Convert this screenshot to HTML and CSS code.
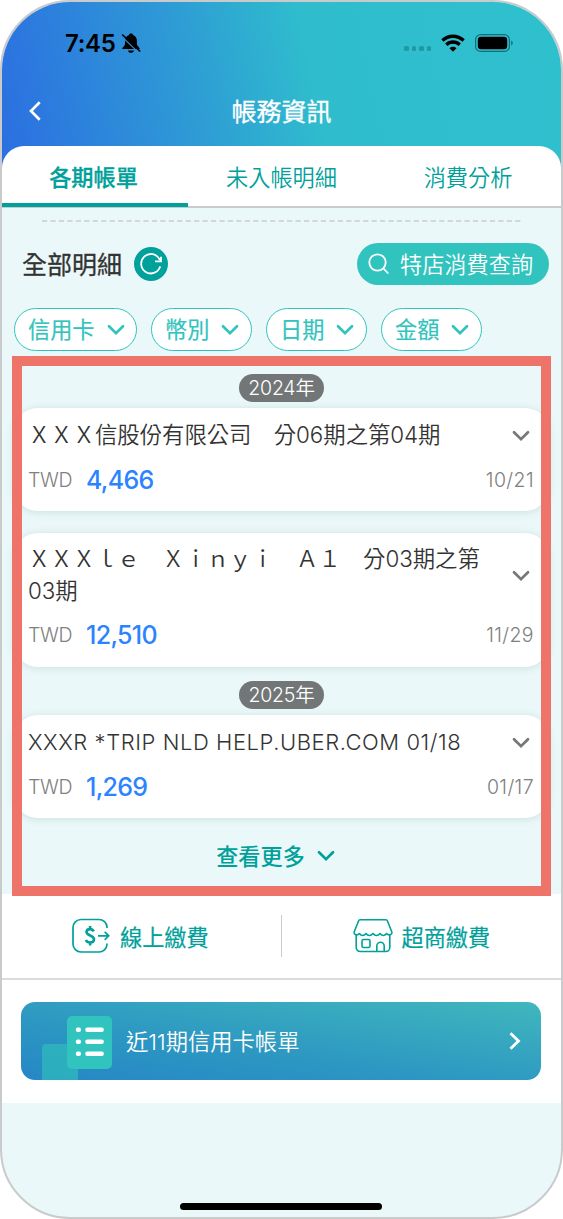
FILE: index.html
```
<!DOCTYPE html>
<html lang="zh-Hant">
<head>
<meta charset="utf-8">
<meta name="viewport" content="width=device-width, initial-scale=1">
<title>帳務資訊</title>
<link rel="stylesheet" href="styles.css">
</head>
<body>
<svg class="defs" aria-hidden="true">
  <symbol id="chevron" viewBox="0 0 18 12"><path d="M2 2.200 9 9.200 16 2.200" fill="none" stroke="currentColor" stroke-width="2.700" stroke-linecap="round"/></symbol>
</svg>
<div class="phone">
  <header class="header">
    <div class="status">
      <span class="clock">7:45</span>
      <svg class="bell" viewBox="0 0 20 20"><path d="M10 .5c1.300 0 2 .7 2.200 1.700 2.600.8 3.700 3 3.700 5.600v3c0 1.500.8 2.300 1.900 3.400.6.6.9 1.100.9 1.900H1.200c0-.8.3-1.300.9-1.900C3.200 13 4 12.300 4 10.800v-3c0-2.600 1.200-4.800 3.800-5.600C8 1.200 8.700.5 10 .5zM7 17.400h6c-.3 1.500-1.400 2.300-3 2.300s-2.700-.8-3-2.300z"/><path class="bell-gap" d="M.1 3 18.200 20.100"/><path class="bell-slash" d="M1.200 1.500 19.200 18.500"/></svg>
      <span class="dots"><i></i><i></i><i></i><i></i></span>
      <svg class="wifi" viewBox="0 0 24 18"><g fill="none" stroke="#000" stroke-width="3.300"><path d="M1.400 6.500a15.300 15.300 0 0 1 21.200 0"/><path d="M5.300 10.700a9.600 9.600 0 0 1 13.400 0"/></g><path d="M12 17.700 8.500 14.200a5 5 0 0 1 7 0z"/></svg>
      <svg class="battery" viewBox="0 0 39 18"><rect x=".6" y=".6" width="33.800" height="16.800" rx="5" fill="none" stroke="#156d78" stroke-width="1.200"/><rect x="2.800" y="2.800" width="29.400" height="12.400" rx="3.300"/><path d="M36.200 6.500c2 .8 2 4.200 0 5z" fill="#156d78"/></svg>
    </div>
    <div class="nav">
      <svg class="back" viewBox="0 0 14 22"><path d="M11.700 2.200 3 11l8.700 8.800" fill="none" stroke="#fff" stroke-width="2.700"/></svg>
      <h1>帳務資訊</h1>
    </div>
  </header>

  <nav class="tabs">
    <a class="tab active">各期帳單</a>
    <a class="tab">未入帳明細</a>
    <a class="tab">消費分析</a>
  </nav>

  <main class="details">
    <svg class="dash" viewBox="0 0 479 2"><path d="M0 1H479" stroke="#ccc" stroke-width="1.500" stroke-dasharray="5.200 3.250"/></svg>
    <div class="heading">
      <h2>全部明細</h2>
      <svg class="refresh" viewBox="0 0 34 34"><circle cx="17" cy="17" r="17" fill="#00a19b"/><path d="M25.600 12.500A9.700 9.700 0 1 0 26 20" fill="none" stroke="#fff" stroke-width="1.800" stroke-linecap="round"/><path d="M27 9.700v4.700h-6" fill="none" stroke="#fff" stroke-width="1.800"/></svg>
      <button class="search"><svg viewBox="0 0 22 22"><circle cx="9.500" cy="9.500" r="8.200"/><path d="m15 15 5.300 5.500"/></svg>特店消費查詢</button>
    </div>
    <div class="chips">
      <button class="chip wide">信用卡<svg class="chev"><use href="#chevron"/></svg></button>
      <button class="chip">幣別<svg class="chev"><use href="#chevron"/></svg></button>
      <button class="chip">日期<svg class="chev"><use href="#chevron"/></svg></button>
      <button class="chip">金額<svg class="chev"><use href="#chevron"/></svg></button>
    </div>

    <section class="records">
      <div class="year">2024年</div>
      <article class="card">
        <div class="top"><p class="name">ＸＸＸ信股份有限公司　分06期之第04期</p><svg class="chev"><use href="#chevron"/></svg></div>
        <div class="sum"><span class="cur">TWD</span><b>4,466</b><time>10/21</time></div>
      </article>
      <article class="card double">
        <div class="top"><p class="name">ＸＸＸｌｅ　Ｘｉｎｙｉ　Ａ１　分03期之第<br>03期</p><svg class="chev"><use href="#chevron"/></svg></div>
        <div class="sum"><span class="cur">TWD</span><b>12,510</b><time>11/29</time></div>
      </article>
      <div class="year second">2025年</div>
      <article class="card">
        <div class="top"><p class="name latin">XXXR *TRIP NLD HELP.UBER.COM 01/18</p><svg class="chev"><use href="#chevron"/></svg></div>
        <div class="sum"><span class="cur">TWD</span><b>1,269</b><time>01/17</time></div>
      </article>
      <a class="more">查看更多<svg class="chev"><use href="#chevron"/></svg></a>
      <div class="highlight"></div>
    </section>
  </main>

  <section class="pay">
    <a class="method">
      <svg class="online" viewBox="0 0 38 36"><g fill="none" stroke="#00a19b" stroke-width="1.700"><path d="M35 10V9a8 8 0 0 0-8-7.500H9A8 8 0 0 0 1 9.500V26a8 8 0 0 0 8 8h18a8 8 0 0 0 8-7.500V25.500"/><path d="M26 17.800h10.500m-3.800-4 4 4-4 4" stroke-width="1.700"/><path d="M21.800 13.300c-.8-1.500-2-2.200-3.700-2.200-2.300 0-3.600 1.200-3.600 3 0 4 7.500 2.700 7.500 7.100 0 2-1.500 3.300-4 3.300-2 0-3.400-.8-4.100-2.500M18.100 8v3m0 13.500V27.500" stroke-width="2.600"/></g></svg>
      <span>線上繳費</span>
    </a>
    <a class="method store">
      <svg class="shop" viewBox="0 0 40 34"><g fill="none" stroke="#00a19b" stroke-width="1.600" stroke-linejoin="round"><path d="M5.500 2q.4-1.200 1.700-1.200h25.600q1.300 0 1.700 1.200l4.400 11.300c.4 2.500-3.500 3.600-5.300 1.200-2 2.700-4.500 2.700-6.600 0-2 2.700-4.900 2.700-7 0-2.100 2.700-5 2.700-7 0-2.100 2.700-4.600 2.700-6.600 0-1.800 2.400-5.700 1.300-5.300-1.200z"/><path d="M3.200 16v12.500a4 4 0 0 0 4 4h25.600a4 4 0 0 0 4-4V16"/><rect x="9" y="20.500" width="8" height="8" rx="1.500"/><path d="M23.800 32v-5a3.700 3.700 0 0 1 7.400 0v5"/></g></svg>
      <span>超商繳費</span>
    </a>
  </section>
  <section class="promo">
    <a class="banner">
      <svg class="bill" viewBox="0 0 74 78"><rect y="42" width="36" height="42" rx="4" fill="#2eb6bd" opacity=".8"/><rect x="25" y="14" width="45" height="53" rx="5" fill="#31c4be"/><g stroke="#fff" stroke-width="4.400" stroke-linecap="round"><path d="M35.900 27.700h1m8.500 0h14.300M35.900 39.700h1m8.500 0h14.300M35.900 51.700h1m8.500 0h14.300"/></g></svg>
      <span class="label">近<span class="num">11</span>期信用卡帳單</span>
      <svg class="next" viewBox="0 0 12 18"><path d="m1.500 1.300 8 7.700-8 7.700" fill="none" stroke="#fff" stroke-width="2.800"/></svg>
    </a>
  </section>
  <footer class="foot"><div class="home"></div></footer>
</div>
</body>
</html>
```
FILE: styles.css
```
* { box-sizing: border-box; }
body { margin: 0; background: #fff; font-family: "Noto Sans CJK TC", sans-serif; }
svg { display: block; flex: none; }
.defs { position: absolute; width: 0; height: 0; }
h1, h2, p { margin: 0; }
button { font: inherit; padding: 0; border: 0; }
.phone { width: 563px; height: 1219px; border: 2px solid #c9cacb; border-radius: 70px; overflow: hidden; background: #eaf8f9; display: flex; flex-direction: column; }
.header { height: 170px; flex: none; background: linear-gradient(78deg, #2b6fe0 0%, #2c78df 8%, #2e9bd5 34%, #2fbdcd 56%, #2fc0ce 100%); }
.status { height: 82px; display: flex; align-items: center; padding-left: 63px; }
.clock { font: 600 24px/30px Inter, sans-serif; width: 51px; letter-spacing: -.3px; white-space: nowrap; padding-top: 1px; }
.bell { width: 20px; height: 20px; margin-left: 5px; }
.bell-gap { stroke: #2b8bd9; stroke-width: 1.2; }
.bell-slash { stroke: #000; stroke-width: 1.700; }
.dots { display: flex; gap: 3px; margin: 11px 0 0 263px; }
.dots i { width: 4.600px; height: 4.600px; border-radius: 1.500px; background: #2597a3; }
.wifi { width: 24px; height: 18px; margin-left: 10px; }
.battery { width: 39px; height: 18px; margin-left: 10px; }
.nav { height: 54px; display: grid; grid-template-columns: 60px 1fr 60px; align-items: center; }
.back { width: 14px; height: 22px; margin-left: 26px; }
.nav h1 { color: #fff; text-align: center; font-size: 25px; line-height: 36px; font-weight: 400; -webkit-text-stroke: .3px; margin-top: -2px; }
.tabs { height: 62px; flex: none; margin-top: -26px; background: #fff; border-radius: 22px 22px 0 0; border-bottom: 2px solid #c9cacb; display: grid; grid-template-columns: 186px 1fr 186px; }
.tab { color: #00a19b; font-size: 22.200px; line-height: 61px; text-align: center; font-weight: 350; height: 61px; }
.tab.active { font-weight: 500; -webkit-text-stroke: .3px; border-bottom: 4px solid #00a19b; padding-right: 3px; }
.details { height: 686px; flex: none; }
.dash { width: 479px; height: 2px; margin: 12px 0 0 40px; }
.heading { height: 42px; margin: 21px 12px 0 20px; display: flex; align-items: center; }
.heading h2 { color: #333; font-size: 25px; line-height: 36px; font-weight: 400; -webkit-text-stroke: .3px; padding-bottom: 2px; }
.refresh { width: 34px; height: 34px; margin-left: 12px; }
.search { margin-left: auto; width: 192px; height: 42px; border-radius: 21px; background: #31c4be; color: #fff; font-size: 22.200px; font-weight: 350; line-height: 40px; display: flex; align-items: center; gap: 10px; padding: 0 0 2px 11px; white-space: nowrap; }
.search svg { width: 22px; height: 22px; margin-top: 2px; fill: none; stroke: #fff; stroke-width: 1.8; }
.chips { display: flex; gap: 14px; margin: 23px 0 0 12px; }
.chip { width: 101px; height: 43px; border: 1.500px solid #31c4be; border-radius: 22px; background: #fff; color: #31c4be; font-size: 22.200px; font-weight: 400; -webkit-text-stroke: .2px; display: flex; align-items: center; gap: 12px; padding: 0 0 3px 13px; white-space: nowrap; }
.chip.wide { width: 123px; }
.chip .chev { margin-top: 4px; }
.chev { width: 18px; height: 12px; }
.records { position: relative; padding: 23px 12px 0; height: 545px; }
.year { width: 85px; height: 28px; margin: 0 auto; border-radius: 14px; background: #727676; color: #fff; font: 350 19.500px/28px Inter, "Noto Sans CJK TC", sans-serif; letter-spacing: -.2px; text-align: center; }
.card { height: 103px; padding: 10px 15px 0 14px; background: #fff; border-radius: 24px; box-shadow: 0 1px 9px rgba(0, 70, 70, .13); }
.year + .card { margin-top: 6px; }
.card.double { height: 134px; margin-top: 22px; }
.top { display: flex; justify-content: space-between; align-items: center; padding-right: 4px; }
.name { color: #333; font: 350 22.400px/34px Inter, "Noto Sans CJK TC", sans-serif; letter-spacing: -.05px; white-space: nowrap; }
.latin { font-size: 22px; font-weight: 300; letter-spacing: .56px; }
.double .name { line-height: 32px; }
.card .chev { color: #777; margin-top: 1px; }
.sum { display: flex; align-items: center; height: 34px; margin-top: 11px; white-space: nowrap; }
.cur, time { color: #808080; font: 300 19.500px/34px Inter, sans-serif; letter-spacing: -.4px; }
.cur { width: 58px; }
.sum b { color: #2b83ff; font: 500 25px/34px Inter, sans-serif; letter-spacing: -.7px; }
.sum time { margin-left: auto; letter-spacing: .4px; }
.year.second { margin-top: 14px; }
.more { height: 34px; margin-top: 20px; padding-right: 12px; display: flex; align-items: center; justify-content: center; gap: 12px; color: #00a19b; font-size: 22.200px; font-weight: 500; }
.more .chev { margin-top: 2px; }
.highlight { position: absolute; inset: 5px 10px 0 10px; border: 10px solid #ee7368; }
.pay { height: 86px; flex: none; background: #fff; border-bottom: 2px solid #dbdbdb; display: flex; padding-top: 21px; }
.method { flex: 1; height: 42px; padding-left: 70px; display: flex; align-items: center; gap: 10px; color: #00a19b; font-size: 22.200px; font-weight: 400; -webkit-text-stroke: .2px; white-space: nowrap; }
.store { border-left: 1px solid #c9cacb; padding-left: 71px; gap: 9px; }
.online { width: 38px; height: 36px; }
.shop { width: 40px; height: 34px; }
.promo { height: 123px; flex: none; background: #fff; padding: 22px 20px 0 19px; }
.banner { height: 78px; border-radius: 14px; overflow: hidden; background: linear-gradient(8deg, #2689c5 5%, #2d98c2 42%, #40b7bd 100%); display: flex; align-items: center; padding: 0 20px 0 21px; color: #fff; font-size: 22.300px; font-weight: 350; white-space: nowrap; }
.bill { width: 74px; height: 78px; }
.label { margin: -2px 0 0 10px; }
.num { font: 300 22px Inter, sans-serif; letter-spacing: 0; }
.next { width: 12px; height: 18px; margin-left: auto; }
.foot { flex: 1; display: flex; align-items: flex-end; justify-content: center; padding: 0 1px 7px 0; }
.home { width: 202px; height: 7px; border-radius: 4px; background: #000; }
```
